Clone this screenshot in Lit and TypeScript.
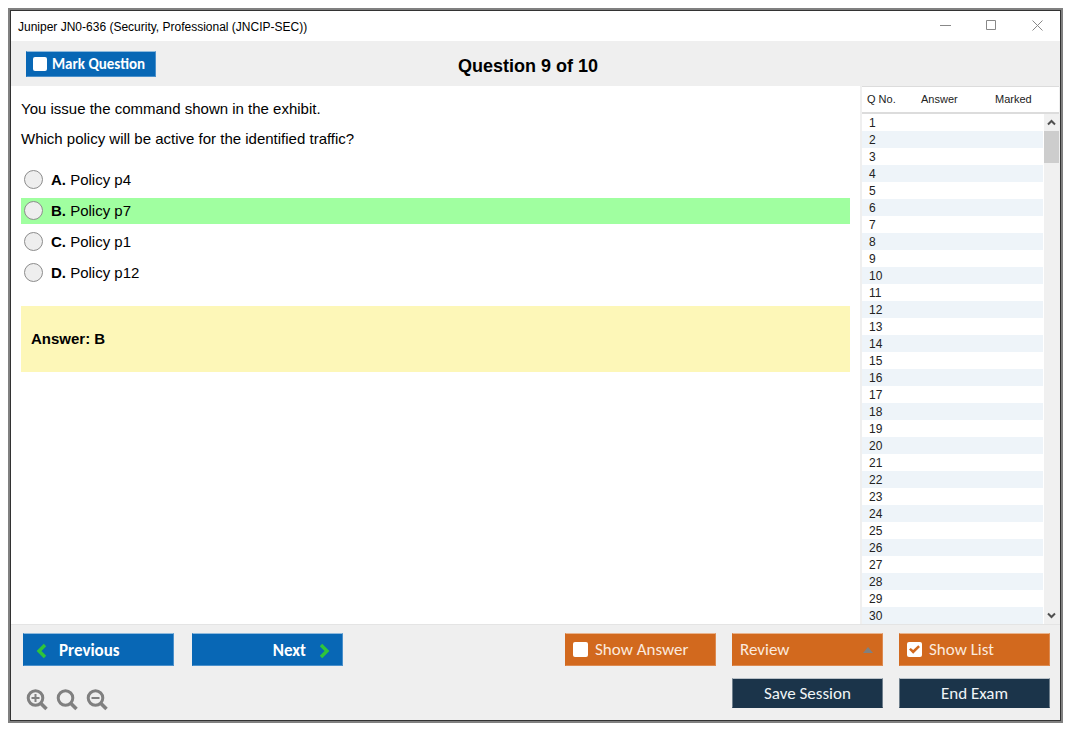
import { LitElement, html, css, svg } from "lit";
import { customElement, state } from "lit/decorators.js";
import { classMap } from "lit/directives/class-map.js";

interface Option {
  letter: string;
  text: string;
}

const OPTIONS: Option[] = [
  { letter: "A", text: "Policy p4" },
  { letter: "B", text: "Policy p7" },
  { letter: "C", text: "Policy p1" },
  { letter: "D", text: "Policy p12" },
];

const CORRECT = "B";
const QUESTION_NUMBERS = Array.from({ length: 30 }, (_, i) => i + 1);

@customElement("question-list")
export class QuestionList extends LitElement {
  static styles = css`
    :host {
      display: flex;
      background: #fff;
      border: solid #efefef;
      border-width: 0 1px 0 2px;
      color: #222;
      font-size: 11px;
      overflow: hidden;
    }
    .table {
      flex: 1;
      border-collapse: separate;
      border-spacing: 0;
      table-layout: fixed;
      align-self: flex-start;
    }
    .head {
      box-sizing: border-box;
      height: 28px;
      padding: 0 0 2px;
      border-top: 1px solid #dcdcdc;
      border-bottom: 2px solid #dcdcdc;
      font-weight: 400;
      text-align: left;
    }
    .head.number {
      width: 53px;
      padding-left: 5px;
    }
    .head.answer {
      padding-left: 6px;
    }
    .head.marked {
      width: 48px;
    }
    .cell {
      box-sizing: border-box;
      height: 17px;
      padding: 2px 0 0;
      font-size: 12px;
      line-height: 15px;
    }
    .cell.number {
      padding-left: 7px;
    }
    .row:nth-child(even) .cell {
      background: #eef4f9;
    }
    .rail {
      display: flex;
      flex-direction: column;
      width: 16px;
    }
    .cap {
      box-sizing: border-box;
      height: 28px;
      border-top: 1px solid #dcdcdc;
      border-bottom: 2px solid #dcdcdc;
    }
    .track {
      flex: 1;
      display: flex;
      flex-direction: column;
      background: #f0f0f0;
      margin-left: 1px;
    }
    .arrow {
      display: grid;
      place-items: center;
      height: 17px;
      padding: 0;
      border: 0;
      background: none;
    }
    .thumb {
      height: 32px;
      background: #cdcdcd;
    }
    .space {
      flex: 1;
    }
    .glyph {
      fill: none;
      stroke: #505050;
      stroke-width: 2;
    }
  `;

  render() {
    return html`
      <table class="table">
        <thead>
          <tr>
            <th class="head number" scope="col">Q No.</th>
            <th class="head answer" scope="col">Answer</th>
            <th class="head marked" scope="col">Marked</th>
          </tr>
        </thead>
        <tbody>
          ${QUESTION_NUMBERS.map(
            (n) => html`<tr class="row">
              <td class="cell number">${n}</td>
              <td class="cell"></td>
              <td class="cell"></td>
            </tr>`
          )}
        </tbody>
      </table>
      <div class="rail">
        <div class="cap"></div>
        <div class="track">
          <button class="arrow" aria-label="Scroll up">
            <svg width="9" height="7" viewBox="0 0 9 7"><path class="glyph" d="M1 5.5 4.5 2 8 5.5" /></svg>
          </button>
          <div class="thumb"></div>
          <div class="space"></div>
          <button class="arrow" aria-label="Scroll down">
            <svg width="9" height="7" viewBox="0 0 9 7"><path class="glyph" d="M1 1.5 4.5 5 8 1.5" /></svg>
          </button>
        </div>
      </div>
    `;
  }
}

@customElement("app-root")
export class AppRoot extends LitElement {
  @state() private marked = false;
  @state() private showAnswer = false;
  @state() private showList = true;

  static styles = css`
    :host {
      display: flex;
      box-sizing: border-box;
      height: 100vh;
      padding: 8px 12px 12px 8px;
      background: #fff;
      color: #000;
      font-family: "Liberation Sans", Arial, sans-serif;
    }
    .window {
      flex: 1;
      display: flex;
      border: 2px solid #808080;
      min-width: 0;
    }
    .inner {
      flex: 1;
      display: flex;
      flex-direction: column;
      border: 1px solid #333;
      min-width: 0;
    }
    .titlebar {
      display: flex;
      align-items: center;
      justify-content: space-between;
      height: 30px;
      padding: 0 8px 0 7px;
    }
    .title {
      padding-top: 2px;
      font-size: 12px;
    }
    .window-buttons {
      display: flex;
    }
    .window-button {
      display: grid;
      place-items: center;
      width: 30px;
      height: 28px;
      margin-left: 16px;
      padding: 0 0 2px;
      border: 0;
      background: none;
    }
    .thin {
      fill: none;
      stroke: #888;
      stroke-width: 1;
    }
    .header {
      display: grid;
      grid-template-columns: 1fr auto 1fr;
      align-items: center;
      height: 45px;
      padding: 0 30px 0 15px;
      background: #efefef;
    }
    .heading {
      margin: 4px 0 0;
      font-size: 18px;
      line-height: 22px;
    }
    .button {
      box-sizing: border-box;
      display: flex;
      align-items: center;
      border: 1px solid;
      margin: 0;
      color: #fff;
      font-family: Carlito, Calibri, Lato, sans-serif;
      font-size: 17px;
      line-height: 20px;
    }
    .blue {
      background: #0867b5;
      border-color: #8fbadd #4a90cb #4a90cb #0867b5;
      font-weight: 700;
    }
    .orange {
      background: #d2691e;
      border-color: #e9b48e #dd8a50 #dd8a50 #d2691e;
      color: #fbeadf;
    }
    .navy {
      justify-content: center;
      background: #1b344a;
      border-color: #b9c1c8 #6f7f8c #1b344a #6f7f8c;
      padding: 2px 6px 0;
      color: #f0f4f7;
    }
    .mark {
      width: 130px;
      height: 26px;
      padding: 0 6px;
      gap: 5px;
      font-size: 15px;
    }
    .check {
      appearance: none;
      display: grid;
      place-items: center;
      width: 14px;
      height: 14px;
      margin: 0;
      border-radius: 2px;
      background: #fff;
    }
    .check.large {
      width: 15px;
      height: 15px;
    }
    .check:checked::after {
      content: "";
      width: 11px;
      height: 9px;
      background: #d2691e;
      clip-path: polygon(0 50%, 16% 32%, 38% 56%, 84% 4%, 100% 22%, 38% 96%);
    }
    .main {
      flex: 1;
      display: flex;
      min-height: 0;
    }
    .question {
      flex: 1;
      padding: 8px 10px;
      font-size: 15px;
      min-width: 0;
    }
    .text {
      margin: 0;
      line-height: 30px;
    }
    .options {
      display: flex;
      flex-direction: column;
      gap: 5px;
      margin: 13px 0 20px;
      padding: 0;
      border: 0;
    }
    .option {
      box-sizing: border-box;
      display: flex;
      align-items: center;
      gap: 8px;
      height: 26px;
      padding: 0 0 2px 3px;
    }
    .option.correct {
      background: #a0ffa0;
    }
    .radio {
      appearance: none;
      box-sizing: border-box;
      width: 19px;
      height: 19px;
      margin: 0;
      border: 1px solid #8c8c8c;
      border-radius: 50%;
      background: #eee;
    }
    .radio:checked {
      background: radial-gradient(#333 4px, #eee 5px);
    }
    .answer {
      margin: 0;
      padding: 23px 10px;
      background: #fdf7b8;
      font-weight: 700;
      line-height: 20px;
    }
    .list {
      width: 197px;
    }
    .footer {
      display: flex;
      justify-content: space-between;
      padding: 8px 10px 12px 12px;
      border-top: 1px solid #e4e4e4;
      background: #efefef;
    }
    .nav {
      display: flex;
      gap: 18px;
    }
    .nav-button {
      width: 151px;
      height: 33px;
      padding: 2px 12px 0;
      gap: 12px;
    }
    .next {
      justify-content: flex-end;
      gap: 13px;
    }
    .chevron {
      fill: none;
      stroke: #2fc53a;
      stroke-width: 3.4;
    }
    .zoom {
      display: flex;
      gap: 8px;
      margin-top: 23px;
      padding-left: 3px;
    }
    .zoom-button {
      display: flex;
      height: 19px;
      padding: 0;
      border: 0;
      background: none;
    }
    .lens {
      fill: none;
      stroke: #808080;
      stroke-width: 3;
    }
    .lens-mark {
      fill: none;
      stroke: #808080;
      stroke-width: 2;
    }
    .lens-handle {
      fill: none;
      stroke: #808080;
      stroke-width: 3.6;
    }
    .actions {
      display: grid;
      grid-template-columns: repeat(3, 151px);
      grid-template-rows: 33px 30px;
      column-gap: 16px;
      row-gap: 12px;
    }
    .toggle {
      padding: 0 7px;
      gap: 7px;
    }
    .review {
      display: grid;
      grid-template-columns: 1fr;
    }
    .review-select {
      appearance: none;
      grid-area: 1 / 1;
      width: 100%;
      height: 33px;
      padding: 0 7px;
    }
    .review-arrow {
      grid-area: 1 / 1;
      place-self: center end;
      margin-right: 10px;
      pointer-events: none;
      z-index: 1;
    }
    .save {
      grid-column: 2;
    }
  `;

  private lens(mark: unknown) {
    return html`<svg width="22" height="22" viewBox="0 0 22 22">
      <circle class="lens" cx="9.5" cy="9" r="7.3" />
      <path class="lens-handle" d="M14.7 14.2 20.5 20" />
      ${mark}
    </svg>`;
  }

  render() {
    return html`
      <div class="window">
        <div class="inner">
          <div class="titlebar">
            <span class="title">Juniper JN0-636 (Security, Professional (JNCIP-SEC))</span>
            <div class="window-buttons">
              <button class="window-button" aria-label="Minimize">
                <svg width="11" height="11" viewBox="0 0 11 11"><path class="thin" d="M0 5.5h11" /></svg>
              </button>
              <button class="window-button" aria-label="Maximize">
                <svg width="11" height="11" viewBox="0 0 11 11"><path class="thin" d="M.5.5h9v9h-9z" /></svg>
              </button>
              <button class="window-button" aria-label="Close">
                <svg width="11" height="11" viewBox="0 0 11 11"><path class="thin" d="M.5.5l10 10m0-10l-10 10" /></svg>
              </button>
            </div>
          </div>

          <header class="header">
            <label class="button blue mark">
              <input
                class="check"
                type="checkbox"
                .checked=${this.marked}
                @change=${() => (this.marked = !this.marked)}
              />
              Mark Question
            </label>
            <h1 class="heading">Question 9 of 10</h1>
          </header>

          <div class="main">
            <main class="question">
              <p class="text">You issue the command shown in the exhibit.</p>
              <p class="text">Which policy will be active for the identified traffic?</p>
              <fieldset class="options" aria-label="Answers">
                ${OPTIONS.map(
                  (o) => html`<label class=${classMap({ option: true, correct: o.letter === CORRECT })}>
                    <input class="radio" type="radio" name="answer" value=${o.letter} />
                    <span><b>${o.letter}.</b> ${o.text}</span>
                  </label>`
                )}
              </fieldset>
              <p class="answer">Answer: ${CORRECT}</p>
            </main>
            ${this.showList ? html`<question-list class="list"></question-list>` : null}
          </div>

          <footer class="footer">
            <div>
              <div class="nav">
                <button class="button blue nav-button">
                  <svg width="11" height="16" viewBox="0 0 11 16"><path class="chevron" d="M9 2 3 8l6 6" /></svg>
                  Previous
                </button>
                <button class="button blue nav-button next">
                  Next
                  <svg width="11" height="16" viewBox="0 0 11 16"><path class="chevron" d="M2 2l6 6-6 6" /></svg>
                </button>
              </div>
              <div class="zoom">
                <button class="zoom-button" aria-label="Zoom in">
                  ${this.lens(svg`<path class="lens-mark" d="M9.5 5v8M5.5 9h8" />`)}
                </button>
                <button class="zoom-button" aria-label="Reset zoom">${this.lens(null)}</button>
                <button class="zoom-button" aria-label="Zoom out">
                  ${this.lens(svg`<path class="lens-mark" d="M5.5 9h8" />`)}
                </button>
              </div>
            </div>
            <div class="actions">
              <label class="button orange toggle">
                <input
                  class="check large"
                  type="checkbox"
                  .checked=${this.showAnswer}
                  @change=${() => (this.showAnswer = !this.showAnswer)}
                />
                Show Answer
              </label>
              <div class="review">
                <select class="button orange review-select" aria-label="Review">
                  <option>Review</option>
                </select>
                <svg class="review-arrow" width="10" height="6" viewBox="0 0 10 6">
                  <path fill="#808080" d="M0 6 5 0l5 6z" />
                </svg>
              </div>
              <label class="button orange toggle">
                <input
                  class="check large"
                  type="checkbox"
                  .checked=${this.showList}
                  @change=${() => (this.showList = !this.showList)}
                />
                Show List
              </label>
              <button class="button navy save">Save Session</button>
              <button class="button navy">End Exam</button>
            </div>
          </footer>
        </div>
      </div>
    `;
  }
}
